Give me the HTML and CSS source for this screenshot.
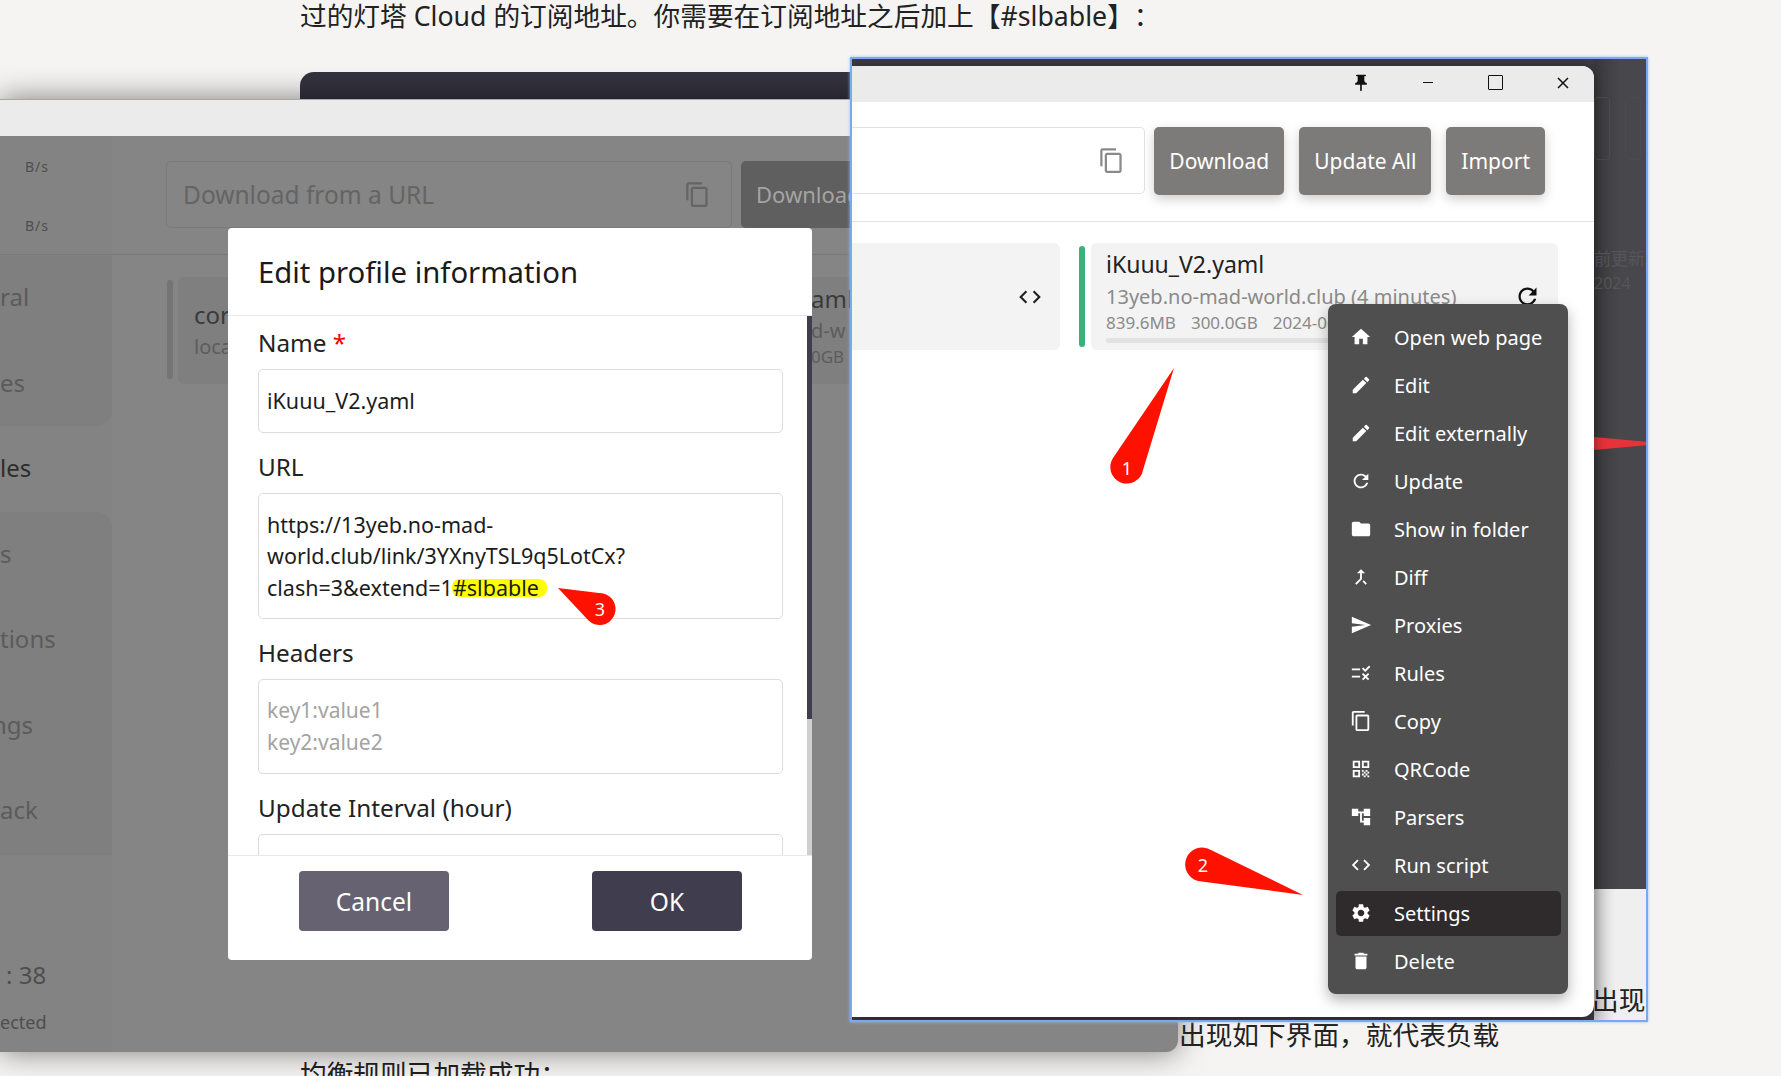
FILE: index.html
```html
<!DOCTYPE html>
<html lang="zh-CN">

<head>
  <meta charset="UTF-8" />
  <title>Edit profile information</title>
  <link rel="stylesheet" href="styles.css">
</head>

<body>

  <svg class="sprite" width="0" height="0">
    <symbol id="i-home" viewBox="0 0 24 24"><path d="M10 20v-6h4v6h5v-8h3L12 3 2 12h3v8z" /></symbol>
    <symbol id="i-edit" viewBox="0 0 24 24"><path d="M3 17.25V21h3.75L17.81 9.94l-3.75-3.75L3 17.25zM20.71 7.04c.39-.39.39-1.02 0-1.41l-2.34-2.34a.9959.9959 0 0 0-1.41 0l-1.83 1.83 3.75 3.75 1.83-1.83z" /></symbol>
    <symbol id="i-refresh" viewBox="0 0 24 24"><path d="M17.65 6.35C16.2 4.9 14.21 4 12 4c-4.42 0-7.99 3.58-7.99 8s3.57 8 7.99 8c3.73 0 6.84-2.55 7.73-6h-2.08c-.82 2.33-3.04 4-5.65 4-3.31 0-6-2.69-6-6s2.69-6 6-6c1.66 0 3.14.69 4.22 1.78L13 11h7V4l-2.35 2.35z" /></symbol>
    <symbol id="i-folder" viewBox="0 0 24 24"><path d="M10 4H4c-1.1 0-1.99.9-1.99 2L2 18c0 1.1.9 2 2 2h16c1.1 0 2-.9 2-2V8c0-1.1-.9-2-2-2h-8l-2-2z" /></symbol>
    <symbol id="i-merge" viewBox="0 0 24 24"><path d="M17 20.41 18.41 19 15 15.59 13.59 17 17 20.41zM7.5 8H11v5.59L5.59 19 7 20.41l6-6V8h3.5L12 3.5 7.5 8z" /></symbol>
    <symbol id="i-send" viewBox="0 0 24 24"><path d="M2.01 21 23 12 2.01 3 2 10l15 2-15 2z" /></symbol>
    <symbol id="i-rule" viewBox="0 0 24 24"><path d="M16.54 11 13 7.46l1.41-1.41 2.12 2.12 4.24-4.24 1.41 1.41L16.54 11zM11 7H2v2h9V7zm10 6.41L19.59 12 17 14.59 14.41 12 13 13.41 15.59 16 13 18.59 14.41 20 17 17.41 19.59 20 21 18.59 18.41 16 21 13.41zM11 15H2v2h9v-2z" /></symbol>
    <symbol id="i-copy" viewBox="0 0 24 24"><path d="M16 1H4c-1.1 0-2 .9-2 2v14h2V3h12V1zm3 4H8c-1.1 0-2 .9-2 2v14c0 1.1.9 2 2 2h11c1.1 0 2-.9 2-2V7c0-1.1-.9-2-2-2zm0 16H8V7h11v14z" /></symbol>
    <symbol id="i-qr" viewBox="0 0 24 24"><path d="M3 11h8V3H3v8zm2-6h4v4H5V5zM3 21h8v-8H3v8zm2-6h4v4H5v-4zM13 3v8h8V3h-8zm6 6h-4V5h4v4zM19 19h2v2h-2zM13 13h2v2h-2zM15 15h2v2h-2zM13 17h2v2h-2zM15 19h2v2h-2zM17 17h2v2h-2zM17 13h2v2h-2zM19 15h2v2h-2z" /></symbol>
    <symbol id="i-tree" viewBox="0 0 24 24"><path d="M22 11V3h-7v3H9V3H2v8h7V8h2v10h4v3h7v-8h-7v3h-2V8h2v3z" /></symbol>
    <symbol id="i-code" viewBox="0 0 24 24"><path d="M9.4 16.6 4.8 12l4.6-4.6L8 6l-6 6 6 6 1.4-1.4zm5.2 0 4.6-4.6-4.6-4.6L16 6l6 6-6 6-1.4-1.4z" /></symbol>
    <symbol id="i-gear" viewBox="0 0 24 24"><path d="M19.14 12.94c.04-.3.06-.61.06-.94 0-.32-.02-.64-.07-.94l2.03-1.58c.18-.14.23-.41.12-.61l-1.92-3.32c-.12-.22-.37-.29-.59-.22l-2.39.96c-.5-.38-1.03-.7-1.62-.94l-.36-2.54c-.04-.24-.24-.41-.48-.41h-3.84c-.24 0-.43.17-.47.41l-.36 2.54c-.59.24-1.13.57-1.62.94l-2.39-.96c-.22-.08-.47 0-.59.22L2.74 8.87c-.12.21-.08.47.12.61l2.03 1.58c-.05.3-.09.63-.09.94s.02.64.07.94l-2.03 1.58c-.18.14-.23.41-.12.61l1.92 3.32c.12.22.37.29.59.22l2.39-.96c.5.38 1.03.7 1.62.94l.36 2.54c.05.24.24.41.48.41h3.84c.24 0 .44-.17.47-.41l.36-2.54c.59-.24 1.13-.56 1.62-.94l2.39.96c.22.08.47 0 .59-.22l1.92-3.32c.12-.22.07-.47-.12-.61l-2.01-1.58zM12 15.6c-1.98 0-3.6-1.62-3.6-3.6s1.62-3.6 3.6-3.6 3.6 1.62 3.6 3.6-1.62 3.6-3.6 3.6z" /></symbol>
    <symbol id="i-trash" viewBox="0 0 24 24"><path d="M6 19c0 1.1.9 2 2 2h8c1.1 0 2-.9 2-2V7H6v12zM19 4h-3.5l-1-1h-5l-1 1H5v2h14V4z" /></symbol>
    <symbol id="i-pin" viewBox="0 0 24 24"><path d="M16 9V4h1c.55 0 1-.45 1-1s-.45-1-1-1H7c-.55 0-1 .45-1 1s.45 1 1 1h1v5c0 1.66-1.34 3-3 3v2h5.97v7l1 1 1-1v-7H19v-2c-1.66 0-3-1.34-3-3z" /></symbol>
  </svg>

  <div class="article">
    <p class="para">过的灯塔 Cloud 的订阅地址。你需要在订阅地址之后加上【#slbable】：</p>
    <div class="code-block"></div>
    <p class="para">均衡规则已加载成功：</p>
  </div>

  <!-- window behind, dimmed by the modal -->
  <div class="win-back">
    <div class="titlebar"></div>
    <div class="back-body">
      <div class="side">
        <div class="speed">
          <div class="speed-row">B/s</div>
          <div class="speed-row">B/s</div>
        </div>
        <div class="nav">
          <div class="nav-group">
            <div class="nav-item">ral</div>
            <div class="nav-item">es</div>
          </div>
          <div class="nav-item nav-active">les</div>
          <div class="nav-group nav-group-tall">
            <div class="nav-item">s</div>
            <div class="nav-item">tions</div>
            <div class="nav-item nav-clip">ngs</div>
            <div class="nav-item">ack</div>
          </div>
        </div>
        <div class="side-foot">
          <div class="uptime">: 38</div>
          <div class="connected">ected</div>
        </div>
      </div>
      <div class="back-main">
        <div class="back-toolbar">
          <div class="back-input">
            <span>Download from a URL</span>
            <svg class="icon"><use href="#i-copy" /></svg>
          </div>
          <div class="back-btn">Download</div>
        </div>
        <div class="back-cards">
          <div class="back-bar"></div>
          <div class="back-card">
            <div class="back-name">cor</div>
            <div class="back-sub">loca</div>
          </div>
          <div class="back-card back-card-right">
            <div class="back-name">aml</div>
            <div class="back-sub">d-w</div>
            <div class="back-size">0GB</div>
          </div>
        </div>
      </div>
    </div>
  </div>

  <div class="dialog">
    <div class="dialog-title">Edit profile information</div>
    <div class="dialog-body">
      <div class="fields">
        <div class="label">Name <span class="req">*</span></div>
        <div class="field">iKuuu_V2.yaml</div>
        <div class="label">URL</div>
        <div class="field">https://13yeb.no-mad-<br>world.club/link/3YXnyTSL9q5LotCx?<br>clash=3&amp;extend=1<span class="mark">#slbable</span></div>
        <div class="label">Headers</div>
        <div class="field field-hint">key1:value1<br>key2:value2</div>
        <div class="label">Update Interval (hour)</div>
        <div class="field field-cut"></div>
      </div>
      <div class="scroll"><div class="scroll-thumb"></div></div>
    </div>
    <div class="dialog-foot">
      <button class="dlg-btn dlg-cancel">Cancel</button>
      <button class="dlg-btn dlg-ok">OK</button>
    </div>
  </div>

  <p class="para stray">出现如下界面，就代表负载</p>

  <!-- second screenshot pasted on top, blue selection frame -->
  <div class="frame">
    <div class="app">
      <div class="titlebar app-title">
        <div class="ctl"><svg class="icon pin"><use href="#i-pin" /></svg></div>
        <div class="ctl"><span class="ctl-min"></span></div>
        <div class="ctl"><span class="ctl-max"></span></div>
        <div class="ctl">
          <svg class="ctl-close" viewBox="0 0 14 14"><path d="M2 2l10 10M12 2L2 12" /></svg>
        </div>
      </div>
      <div class="toolbar">
        <div class="url-input">
          <svg class="icon"><use href="#i-copy" /></svg>
        </div>
        <button class="tool-btn">Download</button>
        <button class="tool-btn">Update All</button>
        <button class="tool-btn">Import</button>
      </div>
      <div class="cards">
        <div class="card card-left">
          <svg class="icon"><use href="#i-code" /></svg>
        </div>
        <div class="card-bar"></div>
        <div class="card">
          <div class="card-name">iKuuu_V2.yaml</div>
          <div class="card-row">
            <span class="card-host">13yeb.no-mad-world.club (4 minutes)</span>
            <svg class="icon"><use href="#i-refresh" /></svg>
          </div>
          <div class="card-meta"><span>839.6MB</span><span>300.0GB</span><span>2024-06-18</span></div>
          <div class="card-progress"></div>
        </div>
      </div>

      <div class="menu">
        <div class="menu-item"><svg class="icon"><use href="#i-home" /></svg>Open web page</div>
        <div class="menu-item"><svg class="icon"><use href="#i-edit" /></svg>Edit</div>
        <div class="menu-item"><svg class="icon"><use href="#i-edit" /></svg>Edit externally</div>
        <div class="menu-item"><svg class="icon"><use href="#i-refresh" /></svg>Update</div>
        <div class="menu-item"><svg class="icon"><use href="#i-folder" /></svg>Show in folder</div>
        <div class="menu-item"><svg class="icon"><use href="#i-merge" /></svg>Diff</div>
        <div class="menu-item"><svg class="icon"><use href="#i-send" /></svg>Proxies</div>
        <div class="menu-item"><svg class="icon"><use href="#i-rule" /></svg>Rules</div>
        <div class="menu-item"><svg class="icon"><use href="#i-copy" /></svg>Copy</div>
        <div class="menu-item"><svg class="icon"><use href="#i-qr" /></svg>QRCode</div>
        <div class="menu-item"><svg class="icon"><use href="#i-tree" /></svg>Parsers</div>
        <div class="menu-item"><svg class="icon"><use href="#i-code" /></svg>Run script</div>
        <div class="menu-item menu-item-on"><svg class="icon"><use href="#i-gear" /></svg>Settings</div>
        <div class="menu-item"><svg class="icon"><use href="#i-trash" /></svg>Delete</div>
      </div>
    </div>

    <div class="strip">
      <div class="strip-dark">
        <div class="strip-boxes"><span></span><span></span></div>
        <div class="strip-text">前更新</div>
        <div class="strip-text strip-date">2024</div>
        <div class="strip-arrow"></div>
      </div>
      <div class="strip-light"><p class="para">出现如下</p></div>
    </div>
  </div>

  <svg class="marks" viewBox="0 0 1781 1076">
    <path d="M1174 368L1113 458A16.5 16.5 0 1 0 1143 470Z" />
    <path d="M1303 895L1211 850A17 17 0 1 0 1198 881Z" />
    <path d="M558 588L599 593A16 16 0 1 1 588 620Z" />
    <text x="1127" y="475">1</text>
    <text x="1203" y="872">2</text>
    <text x="600" y="616">3</text>
  </svg>

</body>

</html>
```

FILE: styles.css
```css
* {
  box-sizing: border-box;
}

body {
  position: relative;
  width: 1781px;
  height: 1076px;
  margin: 0;
  overflow: hidden;
  background-color: #f5f4f2;
  color: #1c1c1c;
  font-family: "Noto Sans", "Noto Sans CJK SC", sans-serif;
}

.sprite {
  position: absolute;
}

.icon {
  width: 22px;
  height: 22px;
  flex: none;
  fill: currentColor;
}

.para {
  margin: 0;
  font-size: 26.7px;
  line-height: 32px;
  color: #222;
  white-space: nowrap;
  text-spacing-trim: space-all;
}

/* article behind the windows */
.article {
  padding-left: 300px;
}

.code-block {
  width: 1100px;
  height: 900px;
  margin: 40px 0 86px;
  background-color: #33323f;
  border-radius: 14px;
}

/* back window */
.win-back {
  position: absolute;
  left: 0;
  top: 99px;
  z-index: 1;
  width: 1178px;
  height: 953px;
  display: flex;
  flex-direction: column;
  background-color: #858585;
  border-radius: 0 0 12px 0;
  border-top: 1px solid #a8a8a8;
  box-shadow: 0 0 30px rgba(0, 0, 0, 0.5);
}

.titlebar {
  height: 36px;
  flex: none;
  background-color: #ebebeb;
}

.back-body {
  display: flex;
  flex: 1;
  min-height: 0;
  overflow: hidden;
  border-radius: 0 0 12px 0;
}

.side {
  width: 112px;
  flex: none;
  background-color: #838383;
  color: #4e4e4e;
  display: flex;
  flex-direction: column;
}

.speed {
  height: 119px;
  padding-top: 1px;
  border-bottom: 1px solid #797979;
}

.speed-row {
  height: 59px;
  padding-left: 25px;
  font-size: 14px;
  line-height: 59px;
  letter-spacing: 1px;
}

.nav {
  height: 600px;
  border-bottom: 1px solid #797979;
}

.nav-group {
  height: 171px;
  background-color: #7f7f7f;
  border-radius: 0 0 16px 0;
}

.nav-group-tall {
  height: 343px;
  border-radius: 0 16px 0 0;
}

.nav-item {
  height: 85.6px;
  font-size: 24px;
  line-height: 84px;
  color: #5b5b5b;
}

.nav-active {
  color: #2e2e2e;
}

.nav-clip {
  text-indent: -8px;
}

.side-foot {
  padding-top: 103px;
}

.uptime {
  font-size: 24px;
  line-height: 34px;
  padding-left: 6px;
}

.connected {
  margin-top: 16px;
  font-size: 18px;
  line-height: 28px;
}

.back-main {
  flex: 1;
  min-width: 0;
}

.back-toolbar {
  display: flex;
  gap: 9px;
  height: 119px;
  padding: 25px 0 0 54px;
  border-bottom: 1px solid #797979;
}

.back-input {
  width: 566px;
  height: 67px;
  display: flex;
  align-items: center;
  justify-content: space-between;
  padding: 0 20px 0 16px;
  border: 1px solid #7a7a7a;
  border-radius: 5px;
  font-size: 24.5px;
  color: #646464;
}

.back-input .icon {
  width: 27px;
  height: 27px;
}

.back-btn {
  width: 130px;
  height: 67px;
  padding-left: 15px;
  background-color: #5f5f5f;
  border-radius: 5px;
  font-size: 22px;
  line-height: 67px;
  color: #a4a4a4;
}

.back-cards {
  display: flex;
  padding: 22px 0 0 55px;
}

.back-bar {
  width: 6px;
  height: 99px;
  margin: 3px 5px 0 0;
  background-color: #747474;
  border-radius: 3px;
}

.back-card {
  width: 612px;
  height: 107px;
  padding: 20px 16px 0;
  background-color: #7f7f7f;
  border-radius: 6px;
  color: #3a3a3a;
}

.back-name {
  font-size: 24px;
  line-height: 36px;
}

.back-sub {
  font-size: 20px;
  line-height: 27px;
  color: #5c5c5c;
}

.back-card-right {
  width: 120px;
  padding: 4px 0 0 21px;
}

.back-size {
  font-size: 17px;
  line-height: 26px;
  color: #5c5c5c;
}

/* modal */
.dialog {
  position: absolute;
  left: 228px;
  top: 228px;
  z-index: 2;
  width: 584px;
  height: 732px;
  display: flex;
  flex-direction: column;
  background-color: #fff;
  border-radius: 4px;
}

.dialog-title {
  height: 88px;
  flex: none;
  padding-left: 30px;
  font-size: 29.3px;
  line-height: 88px;
  color: #1a1a1a;
  border-bottom: 1px solid #e8e8e8;
}

.dialog-body {
  display: flex;
  height: 539px;
  flex: none;
  overflow: hidden;
}

.fields {
  flex: 1;
  min-width: 0;
  padding: 12px 24px 0 30px;
}

.label {
  height: 30px;
  margin-bottom: 11px;
  font-size: 24.3px;
  line-height: 30px;
  color: #222;
}

.req {
  color: #f00;
}

.field {
  margin-bottom: 19px;
  padding: 15px 8px;
  border: 1px solid #dcdcdc;
  border-radius: 5px;
  font-size: 21.5px;
  line-height: 31.5px;
  color: #1c1c1c;
}

.field-hint {
  font-size: 21px;
  color: #a3a3a3;
}

.field-cut {
  height: 80px;
}

.mark {
  display: inline-block;
  margin: 0 -8px 0 -1px;
  padding: 0 8px 0 1px;
  background-color: #ffff00;
  border-radius: 8px;
  line-height: 18px;
}

.scroll {
  width: 5px;
  flex: none;
  background-color: #cfcfcf;
}

.scroll-thumb {
  height: 403px;
  background-color: #403d4e;
}

.dialog-foot {
  display: flex;
  flex: 1;
  justify-content: space-between;
  padding: 15px 70px 0 71px;
  border-top: 1px solid #e8e8e8;
}

.dlg-btn {
  width: 150px;
  height: 60px;
  border: none;
  border-radius: 4px;
  font-family: inherit;
  font-size: 24.5px;
  color: #fff;
}

.dlg-cancel {
  background-color: #666272;
}

.dlg-ok {
  background-color: #403d4e;
}

.stray {
  position: absolute;
  left: 1179px;
  top: 1019px;
  z-index: 2;
}

/* front screenshot */
.frame {
  position: absolute;
  left: 850px;
  top: 57px;
  z-index: 3;
  width: 798px;
  height: 965px;
  display: flex;
  overflow: hidden;
  padding-top: 7px;
  background-color: #3d3c43;
  border: 2px solid #7aa9f2;
  box-shadow: 0 0 3px #9cc0f7;
}

.app {
  position: relative;
  z-index: 1;
  width: 742px;
  height: 951px;
  flex: none;
  display: flex;
  flex-direction: column;
  background-color: #fff;
  border-radius: 0 12px 12px 0;
  box-shadow: 0 2px 14px rgba(0, 0, 0, 0.45);
}

.app-title {
  display: flex;
  justify-content: flex-end;
  border-radius: 0 12px 0 0;
}

.ctl {
  width: 67.5px;
  height: 33px;
  display: flex;
  align-items: center;
  justify-content: center;
  padding-left: 6px;
  color: #111;
}

.pin {
  width: 20px;
  height: 20px;
}

.ctl-min {
  width: 10px;
  height: 1.5px;
  background-color: #111;
}

.ctl-max {
  width: 15px;
  height: 15px;
  border: 1.5px solid #111;
  border-radius: 1px;
}

.ctl-close {
  width: 14px;
  height: 14px;
  fill: none;
  stroke: #111;
  stroke-width: 1.5;
}

.toolbar {
  display: flex;
  gap: 15px;
  height: 120px;
  flex: none;
  padding: 25px 49px 0 0;
  border-bottom: 1px solid #e3e3e3;
}

.url-input {
  flex: 1;
  min-width: 0;
  height: 67px;
  margin-right: -6px;
  display: flex;
  align-items: center;
  justify-content: flex-end;
  padding-right: 19px;
  border: 1px solid #e2e2e2;
  border-left: none;
  border-radius: 0 5px 5px 0;
  color: #8a8a8a;
}

.url-input .icon {
  width: 27px;
  height: 27px;
}

.tool-btn {
  height: 68px;
  flex: none;
  padding: 0 15px;
  border: none;
  border-radius: 5px;
  background-color: #7d7b79;
  box-shadow: 0 4px 12px rgba(0, 0, 0, 0.2);
  font-family: inherit;
  font-size: 21px;
  color: #fff;
  white-space: nowrap;
}

.cards {
  display: flex;
  padding-top: 21px;
}

.card {
  width: 467px;
  height: 107px;
  padding: 4px 15px 0;
  margin-left: 6px;
  background-color: #f3f3f3;
  border-radius: 6px;
  overflow: hidden;
}

.card-left {
  width: 208px;
  margin-left: 0;
  margin-right: 19px;
  display: flex;
  align-items: center;
  justify-content: flex-end;
  padding: 0 17px;
  border-radius: 0 6px 6px 0;
  color: #222;
}

.card-left .icon {
  width: 26px;
  height: 26px;
}

.card-bar {
  width: 6px;
  height: 101px;
  margin-top: 3px;
  background-color: #3cb27b;
  border-radius: 3px;
}

.card-name {
  font-size: 23px;
  line-height: 35px;
  color: #222;
}

.card-row {
  display: flex;
  align-items: center;
  justify-content: space-between;
  height: 28px;
  padding-right: 2px;
  color: #111;
}

.card-row .icon {
  width: 27px;
  height: 27px;
}

.card-host {
  font-size: 20px;
  color: #8a8a8a;
}

.card-meta {
  display: flex;
  gap: 15px;
  margin-top: 0;
  font-size: 17px;
  line-height: 26px;
  color: #8a8a8a;
}

.card-progress {
  height: 5px;
  margin-top: 2px;
  background-color: #e2e2e2;
  border-radius: 3px;
}

.menu {
  position: absolute;
  right: 26px;
  top: 238px;
  width: 240px;
  height: 690px;
  padding: 10.5px 7px 0 8px;
  background-color: #4f4f4f;
  border-radius: 8px;
  box-shadow: 0 6px 14px rgba(0, 0, 0, 0.3);
  color: #fff;
}

.menu-item {
  display: flex;
  align-items: center;
  gap: 22px;
  height: 45px;
  margin-bottom: 3px;
  padding-left: 14px;
  font-size: 20px;
  border-radius: 5px;
}

.menu-item-on {
  background-color: #2f2a2b;
}

/* what shows of the page to the right of the app window */
.strip {
  flex: 1;
  min-width: 0;
  margin-top: -7px;
  display: flex;
  flex-direction: column;
  overflow: hidden;
}

.strip-dark {
  position: relative;
  height: 830px;
  flex: none;
  padding-top: 38px;
  background: linear-gradient(90deg, #39393b, #48474b 50%);
  color: #56555a;
}

.strip-boxes {
  display: flex;
  gap: 15px;
  height: 63px;
  margin-bottom: 87px;
}

.strip-boxes span {
  width: 16px;
  border: 1px solid #4c4b4f;
  border-radius: 4px;
}

.strip-text {
  font-size: 17px;
  line-height: 24px;
  white-space: nowrap;
}

.strip-date {
  font-size: 16px;
}

.strip-arrow {
  position: absolute;
  left: 0;
  top: 378px;
  width: 54px;
  height: 13px;
  background-color: #e8323a;
  clip-path: polygon(0 0, 100% 38%, 100% 62%, 0 100%);
}

.strip-light {
  flex: 1;
  padding-top: 95px;
  text-indent: -2px;
  background: linear-gradient(90deg, #c9c9c9, #efefef 40%);
}

.marks {
  position: absolute;
  left: 0;
  top: 0;
  z-index: 4;
  width: 1781px;
  height: 1076px;
  fill: #ff1100;
  pointer-events: none;
}

.marks text {
  fill: #fff;
  font-size: 18px;
  text-anchor: middle;
}
```
